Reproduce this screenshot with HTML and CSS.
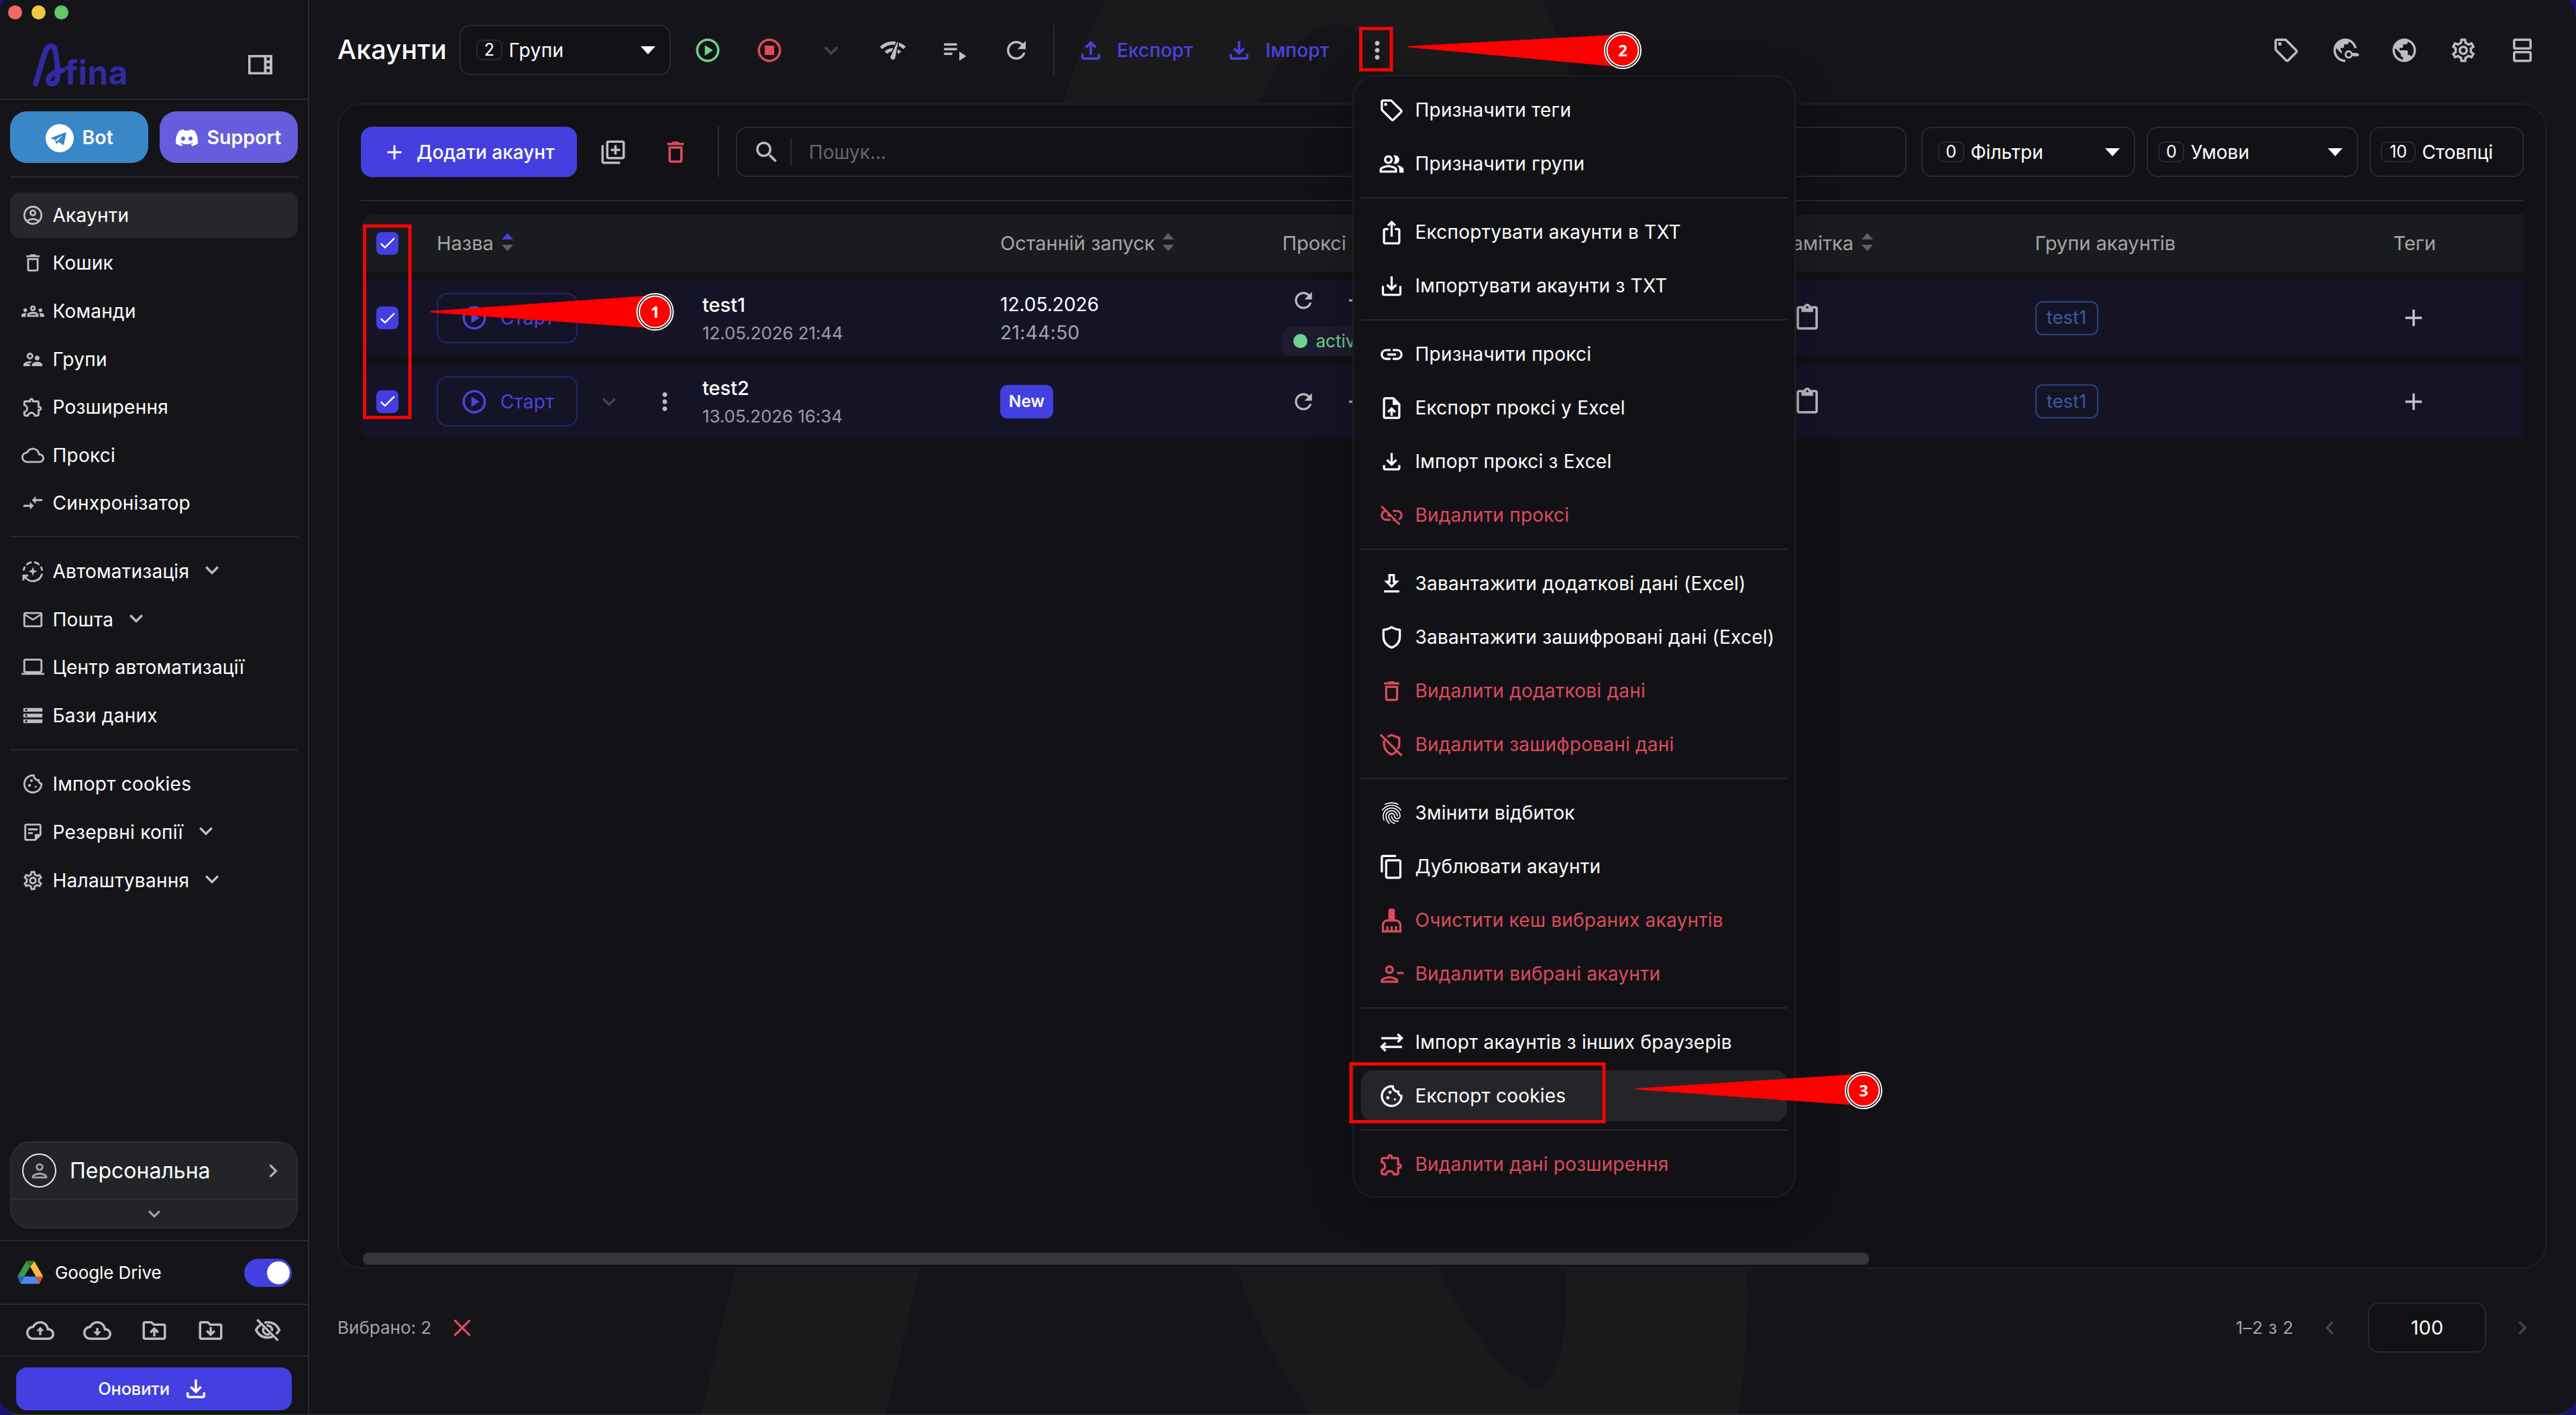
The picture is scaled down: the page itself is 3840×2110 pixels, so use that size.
FILE: index.html
```html
<!DOCTYPE html>
<html lang="uk">
<head>
<meta charset="utf-8">
<title>Afina — Акаунти</title>
<link rel="stylesheet" href="styles.css">
</head>
<body>
<svg class="sprite" aria-hidden="true">
  <symbol id="i-account" viewBox="0 0 24 24"><path d="M12 2C6.48 2 2 6.48 2 12s4.48 10 10 10 10-4.48 10-10S17.52 2 12 2M7.35 18.5C8.66 17.56 10.26 17 12 17s3.34.56 4.65 1.5c-1.31.94-2.91 1.5-4.65 1.5s-3.34-.56-4.65-1.5m10.79-1.38C16.45 15.8 14.32 15 12 15s-4.45.8-6.14 2.12C4.7 15.73 4 13.95 4 12c0-4.42 3.58-8 8-8s8 3.58 8 8c0 1.95-.7 3.73-1.86 5.12M12 6c-1.93 0-3.5 1.57-3.5 3.5S10.07 13 12 13s3.5-1.57 3.5-3.5S13.93 6 12 6m0 5c-.83 0-1.5-.67-1.5-1.5S11.17 8 12 8s1.5.67 1.5 1.5S12.83 11 12 11"/></symbol>
  <symbol id="i-delete" viewBox="0 0 24 24"><path d="M6 19c0 1.1.9 2 2 2h8c1.1 0 2-.9 2-2V7H6zM8 9h8v10H8zm7.5-5-1-1h-5l-1 1H5v2h14V4z"/></symbol>
  <symbol id="i-groups" viewBox="0 0 24 24"><path d="M4 13c1.1 0 2-.9 2-2s-.9-2-2-2-2 .9-2 2 .9 2 2 2m1.13 1.1c-.37-.06-.74-.1-1.13-.1-.99 0-1.93.21-2.78.58C.48 14.9 0 15.62 0 16.43V18h4.5v-1.61c0-.83.23-1.61.63-2.29M20 13c1.1 0 2-.9 2-2s-.9-2-2-2-2 .9-2 2 .9 2 2 2m4 3.43c0-.81-.48-1.53-1.22-1.85-.85-.37-1.79-.58-2.78-.58-.39 0-.76.04-1.13.1.4.68.63 1.46.63 2.29V18H24zm-7.76-2.78c-1.17-.52-2.61-.9-4.24-.9s-3.07.39-4.24.9C6.68 14.13 6 15.21 6 16.39V18h12v-1.61c0-1.18-.68-2.26-1.76-2.74M8.07 16c.09-.23.13-.39.91-.69.97-.38 1.99-.56 3.02-.56s2.05.18 3.02.56c.77.3.81.46.91.69zM12 8c.55 0 1 .45 1 1s-.45 1-1 1-1-.45-1-1 .45-1 1-1m0-2c-1.66 0-3 1.34-3 3s1.34 3 3 3 3-1.34 3-3-1.34-3-3-3"/></symbol>
  <symbol id="i-supervisor" viewBox="0 0 24 24"><path d="M9 12c1.93 0 3.5-1.57 3.5-3.5S10.93 5 9 5 5.5 6.57 5.5 8.5 7.07 12 9 12m0-5c.83 0 1.5.67 1.5 1.5S9.83 10 9 10s-1.5-.67-1.5-1.5S8.17 7 9 7m.05 10H4.77c.99-.5 2.7-1 4.23-1 .11 0 .23.01.34.01.34-.73.93-1.33 1.64-1.81-.73-.13-1.42-.2-1.98-.2-2.34 0-7 1.17-7 3.5V19h7v-1.5c0-.17.02-.34.05-.5m7.45-2.5c-1.84 0-5.5 1.01-5.5 3V19h11v-1.5c0-1.99-3.66-3-5.5-3m1.21-1.82c.76-.43 1.29-1.24 1.29-2.18C19 9.12 17.88 8 16.5 8S14 9.12 14 10.5c0 .94.53 1.75 1.29 2.18.36.2.77.32 1.21.32s.85-.12 1.21-.32"/></symbol>
  <symbol id="i-extension" viewBox="0 0 24 24"><path d="M10.5 4.5c.28 0 .5.22.5.5v2h6v6h2c.28 0 .5.22.5.5s-.22.5-.5.5h-2v6h-2.12c-.68-1.75-2.39-3-4.38-3s-3.7 1.25-4.38 3H4v-2.12c1.75-.68 3-2.39 3-4.38 0-1.99-1.24-3.7-2.99-4.38L4 7h6V5c0-.28.22-.5.5-.5m0-2C9.12 2.5 8 3.62 8 5H4c-1.1 0-1.99.9-1.99 2v3.8h.29c1.49 0 2.7 1.21 2.7 2.7s-1.21 2.7-2.7 2.7H2V20c0 1.1.9 2 2 2h3.8v-.3c0-1.49 1.21-2.7 2.7-2.7s2.7 1.21 2.7 2.7v.3H17c1.1 0 2-.9 2-2v-4c1.38 0 2.5-1.12 2.5-2.5S20.38 11 19 11V7c0-1.1-.9-2-2-2h-4c0-1.38-1.12-2.5-2.5-2.5"/></symbol>
  <symbol id="i-cloud" viewBox="0 0 24 24"><path d="M19.35 10.04C18.67 6.59 15.64 4 12 4 9.11 4 6.6 5.64 5.35 8.04 2.34 8.36 0 10.91 0 14c0 3.31 2.69 6 6 6h13c2.76 0 5-2.24 5-5 0-2.64-2.05-4.78-4.65-4.96M19 18H6c-2.21 0-4-1.79-4-4 0-2.05 1.53-3.76 3.56-3.97l1.07-.11.5-.95C8.08 7.14 9.94 6 12 6c2.62 0 4.88 1.86 5.39 4.43l.3 1.5 1.53.11c1.56.1 2.78 1.41 2.78 2.96 0 1.65-1.35 3-3 3"/></symbol>
  <symbol id="i-compare" viewBox="0 0 24 24"><path d="M9.01 14H2v2h7.01v3L13 15l-3.99-4zm5.98-1v-3H22V8h-7.01V5L11 9z"/></symbol>
  <symbol id="i-auto" viewBox="0 0 24 24"><g fill="none" stroke="currentColor" stroke-width="2"><path d="M2.2 11.2a9.8 9.8 0 0 1 1.5-4.1M5.2 5.2a9.8 9.8 0 0 1 5.4-2.9M13.4 2.3a9.8 9.8 0 0 1 5.4 2.9M20.3 7.1a9.8 9.8 0 0 1 1.5 4.1M21.7 14.4A9.9 9.9 0 0 1 4 18.2"/><path d="M2 21.5v-5.2h5.2"/></g><path d="M12 7.2l1.3 3.5 3.5 1.3-3.5 1.3-1.3 3.5-1.3-3.5L7.2 12l3.5-1.3zM2 16h5l-5 5z"/></symbol>
  <symbol id="i-mail" viewBox="0 0 24 24"><path d="M22 6c0-1.1-.9-2-2-2H4c-1.1 0-2 .9-2 2v12c0 1.1.9 2 2 2h16c1.1 0 2-.9 2-2zm-2 0-8 5-8-5zm0 12H4V8l8 5 8-5z"/></symbol>
  <symbol id="i-laptop" viewBox="0 0 24 24"><path d="M20 18c1.1 0 1.99-.9 1.99-2L22 5c0-1.1-.9-2-2-2H4c-1.1 0-2 .9-2 2v11c0 1.1.9 2 2 2H0v2h24v-2zM4 5h16v11H4z"/></symbol>
  <symbol id="i-storage" viewBox="0 0 24 24"><path d="M2 20h20v-4H2zm2-3h2v2H4zM2 4v4h20V4zm4 3H4V5h2zm-4 7h20v-4H2zm2-3h2v2H4z"/></symbol>
  <symbol id="i-cookie" viewBox="0 0 24 24"><path d="M21.95 10.99c-1.79-.03-3.7-1.95-2.68-4.22-2.97 1-5.78-1.59-5.19-4.56C7.11.74 2 6.41 2 12c0 5.52 4.48 10 10 10 5.89 0 10.54-5.08 9.95-11.01M12 20c-4.41 0-8-3.59-8-8 0-3.31 2.73-8.18 8.08-8.02.42 2.54 2.44 4.56 4.99 4.94.07.36.52 2.55 2.92 3.63C19.7 16.86 16.06 20 12 20"/><circle cx="8.5" cy="13.5" r="1.5"/><circle cx="10.5" cy="8.5" r="1.5"/><circle cx="15" cy="15" r="1"/></symbol>
  <symbol id="i-note" viewBox="0 0 24 24"><path d="M19 5v9h-5v5H5V5zm0-2H5c-1.1 0-2 .9-2 2v14c0 1.1.9 2 2 2h10l6-6V5c0-1.1-.9-2-2-2m-7 11H7v-2h5zm5-4H7V8h10z"/></symbol>
  <symbol id="i-settings" viewBox="0 0 24 24"><path d="M19.43 12.98c.04-.32.07-.64.07-.98s-.03-.66-.07-.98l2.11-1.65c.19-.15.24-.42.12-.64l-2-3.46c-.09-.16-.26-.25-.44-.25-.06 0-.12.01-.17.03l-2.49 1c-.52-.4-1.08-.73-1.69-.98l-.38-2.65C14.46 2.18 14.25 2 14 2h-4c-.25 0-.46.18-.49.42l-.38 2.65c-.61.25-1.17.59-1.69.98l-2.49-1c-.06-.02-.12-.03-.18-.03-.17 0-.34.09-.43.25l-2 3.46c-.13.22-.07.49.12.64l2.11 1.65c-.04.32-.07.65-.07.98s.03.66.07.98l-2.11 1.65c-.19.15-.24.42-.12.64l2 3.46c.09.16.26.25.44.25.06 0 .12-.01.17-.03l2.49-1c.52.4 1.08.73 1.69.98l.38 2.65c.03.24.24.42.49.42h4c.25 0 .46-.18.49-.42l.38-2.65c.61-.25 1.17-.59 1.69-.98l2.49 1c.06.02.12.03.18.03.17 0 .34-.09.43-.25l2-3.46c.12-.22.07-.49-.12-.64zm-1.98-1.71c.04.31.05.52.05.73s-.02.43-.05.73l-.14 1.13.89.7 1.08.84-.7 1.21-1.27-.51-1.04-.42-.9.68c-.43.32-.84.56-1.25.73l-1.06.43-.16 1.13-.2 1.35h-1.4l-.19-1.35-.16-1.13-1.06-.43c-.43-.18-.83-.41-1.23-.71l-.91-.7-1.06.43-1.27.51-.7-1.21 1.08-.84.89-.7-.14-1.13c-.03-.31-.05-.54-.05-.74s.02-.43.05-.73l.14-1.13-.89-.7-1.08-.84.7-1.21 1.27.51 1.04.42.9-.68c.43-.32.84-.56 1.25-.73l1.06-.43.16-1.13.2-1.35h1.39l.19 1.35.16 1.13 1.06.43c.43.18.83.41 1.23.71l.91.7 1.06-.43 1.27-.51.7 1.21-1.07.85-.89.7zM12 8c-2.21 0-4 1.79-4 4s1.79 4 4 4 4-1.79 4-4-1.79-4-4-4m0 6c-1.1 0-2-.9-2-2s.9-2 2-2 2 .9 2 2-.9 2-2 2"/></symbol>
  <symbol id="i-person" viewBox="0 0 24 24"><path d="M12 6c1.1 0 2 .9 2 2s-.9 2-2 2-2-.9-2-2 .9-2 2-2m0 10c2.7 0 5.8 1.29 6 2H6c.23-.72 3.31-2 6-2m0-12C9.79 4 8 5.79 8 8s1.79 4 4 4 4-1.79 4-4-1.79-4-4-4m0 10c-2.67 0-8 1.34-8 4v2h16v-2c0-2.66-5.33-4-8-4"/></symbol>
  <symbol id="i-chev" viewBox="0 0 24 24"><path d="M7.41 8.59 12 13.17l4.59-4.58L18 10l-6 6-6-6z"/></symbol>
  <symbol id="i-panel" viewBox="0 0 36 29"><path fill-rule="evenodd" d="M0 0h36v29H0zM3.5 3.5v22h20v-22zM27.500 3.500v4.500h4.500v-4.500zM27.500 12.200v4.500h4.500v-4.500zM27.500 21v4.500h4.500v-4.500z"/></symbol>
  <symbol id="i-public" viewBox="0 0 24 24"><path d="M12 2C6.48 2 2 6.480 2 12s4.480 10 10 10 10-4.480 10-10S17.520 2 12 2m-1 17.930c-3.950-.490-7-3.850-7-7.930 0-.620.080-1.210.210-1.790L9 15v1c0 1.100.900 2 2 2zm6.900-2.540c-.260-.810-1-1.390-1.900-1.390h-1v-3c0-.550-.450-1-1-1H8v-2h2c.550 0 1-.450 1-1V7h2c1.100 0 2-.900 2-2v-.410c2.930 1.190 5 4.060 5 7.410 0 2.080-.800 3.970-2.100 5.390"/></symbol>
  <symbol id="i-publickey" viewBox="0 0 24 24"><path d="M11 19.930c-3.950-.490-7-3.850-7-7.930 0-.620.080-1.210.210-1.790L9 15v-3H8v-2h2c.550 0 1-.450 1-1V7h2c1.100 0 2-.900 2-2v-.410c2 .8 3.600 2.400 4.400 4.410l.3 1.200H21.800C20.900 5.500 16.900 2 12 2 6.480 2 2 6.480 2 12s4.480 10 10 10v-2z"/><path fill-rule="evenodd" d="M15 12c-1.930 0-3.500 1.570-3.500 3.500S13.070 19 15 19c1.500 0 2.700-.9 3.200-2.200h1.300l.8.8 1.100-.9 1 .9 1.600-1.700-1.600-1.600h-4.200C17.700 13 16.500 12 15 12m0 1.700a1.800 1.800 0 1 1 0 3.600 1.800 1.800 0 0 1 0-3.600"/></symbol>
  <symbol id="i-tag" viewBox="0 0 24 24"><path d="m21.410 11.410-8.830-8.830c-.370-.370-.880-.580-1.410-.580H4c-1.100 0-2 .900-2 2v7.170c0 .530.210 1.040.590 1.410l8.830 8.830c.780.780 2.050.780 2.830 0l7.170-7.170c.780-.780.780-2.040-.010-2.830M12.830 20 4 11.170V4h7.170L20 12.830z"/><circle cx="6.500" cy="6.500" r="1.500"/></symbol>
  <symbol id="i-people" viewBox="0 0 24 24"><path d="M16.670 13.130C18.040 14.060 19 15.320 19 17v3h4v-3c0-2.180-3.570-3.470-6.330-3.870M15 12c2.210 0 4-1.790 4-4s-1.790-4-4-4c-.470 0-.910.100-1.330.240C14.500 5.270 15 6.580 15 8s-.5 2.730-1.330 3.760c.42.14.86.24 1.330.24m-6 0c2.210 0 4-1.790 4-4s-1.790-4-4-4-4 1.790-4 4 1.790 4 4 4m0-6c1.100 0 2 .9 2 2s-.9 2-2 2-2-.9-2-2 .9-2 2-2m0 7c-2.670 0-8 1.340-8 4v3h16v-3c0-2.660-5.330-4-8-4m6 5H3v-.99C3.200 16.290 6.300 15 9 15s5.800 1.290 6 2z"/></symbol>
  <symbol id="i-share" viewBox="0 0 24 24"><path d="m16 5-1.420 1.420-1.590-1.590V16h-1.980V4.830L9.420 6.420 8 5l4-4zm4 5v11c0 1.100-.9 2-2 2H6c-1.110 0-2-.9-2-2V10c0-1.110.89-2 2-2h3v2H6v11h12V10h-3V8h3c1.100 0 2 .89 2 2"/></symbol>
  <symbol id="i-save" viewBox="0 0 24 24"><path d="M19 12v7H5v-7H3v7c0 1.100.9 2 2 2h14c1.100 0 2-.9 2-2v-7zm-6 .67 2.590-2.580L17 11.500l-5 5-5-5 1.410-1.410L11 12.670V3h2z"/></symbol>
  <symbol id="i-link" viewBox="0 0 24 24"><path d="M3.900 12c0-1.710 1.390-3.100 3.100-3.100h4V7H7c-2.760 0-5 2.240-5 5s2.240 5 5 5h4v-1.900H7c-1.710 0-3.100-1.390-3.100-3.100M8 13h8v-2H8zm9-6h-4v1.900h4c1.710 0 3.100 1.390 3.100 3.100s-1.390 3.100-3.100 3.100h-4V17h4c2.760 0 5-2.240 5-5s-2.240-5-5-5"/></symbol>
  <symbol id="i-upfile" viewBox="0 0 24 24"><path d="M14 2H6c-1.100 0-1.990.9-1.990 2L4 20c0 1.100.89 2 1.990 2H18c1.100 0 2-.9 2-2V8zm4 18H6V4h7v5h5zM8 15.010l1.410 1.410L11 14.840V19h2v-4.160l1.590 1.590L16 15.010 12.010 11z"/></symbol>
  <symbol id="i-down" viewBox="0 0 24 24"><path d="M18 15v3H6v-3H4v3c0 1.100.9 2 2 2h12c1.100 0 2-.9 2-2v-3zm-1-4-1.410-1.410L13 12.170V4h-2v8.170L8.410 9.590 7 11l5 5z"/></symbol>
  <symbol id="i-up" viewBox="0 0 24 24"><path d="M18 15v3H6v-3H4v3c0 1.100.9 2 2 2h12c1.100 0 2-.9 2-2v-3zM7 9l1.410 1.410L11 7.830V16h2V7.830l2.590 2.580L17 9l-5-5z"/></symbol>
  <symbol id="i-unlink" viewBox="0 0 24 24"><path d="M17 7h-4v1.900h4c1.710 0 3.100 1.390 3.100 3.100 0 1.430-.98 2.630-2.310 2.980l1.460 1.460C20.880 15.610 22 13.950 22 12c0-2.760-2.240-5-5-5m-1 4h-2.190l2 2H16zM2 4.270l3.110 3.110C3.290 8.120 2 9.910 2 12c0 2.760 2.240 5 5 5h4v-1.900H7c-1.710 0-3.100-1.390-3.100-3.100 0-1.590 1.210-2.900 2.760-3.070L8.730 11H8v2h2.730L13 15.270V17h1.730l4.010 4L20 19.740 3.270 3z"/></symbol>
  <symbol id="i-getapp" viewBox="0 0 24 24"><path d="M19 9h-4V3H9v6H5l7 7zm-8 2V5h2v6h1.170L12 13.170 9.830 11zm-6 7h14v2H5z"/></symbol>
  <symbol id="i-shield" viewBox="0 0 24 24"><path fill="none" stroke="currentColor" stroke-width="2" stroke-linejoin="round" d="M12 2.500C10 4 7.500 4.800 4.500 5v6.200c0 4.900 3 8.500 7.500 10.100 4.500-1.600 7.500-5.200 7.500-10.100V5C16.500 4.800 14 4 12 2.500z"/></symbol>
  <symbol id="i-unshield" viewBox="0 0 24 24"><path fill="none" stroke="currentColor" stroke-width="2" d="M8.300 4.600 12 3.100l7 2.700v5.300c0 1.800-.4 3.300-1.200 4.800M5 8v3.100c0 4.500 2.900 8.500 7 9.900 1.700-.6 3.200-1.600 4.300-3M1.700 2.700 21.300 22"/></symbol>
  <symbol id="i-finger" viewBox="0 0 24 24"><path d="M17.810 4.470c-.08 0-.16-.02-.23-.06C15.660 3.420 14 3 12.010 3c-1.980 0-3.860.47-5.570 1.410-.24.13-.54.04-.68-.2-.13-.24-.04-.55.2-.68C7.820 2.520 9.860 2 12.010 2c2.130 0 3.990.47 6.030 1.520.25.13.34.43.21.67-.09.18-.26.28-.44.28M3.500 9.720c-.1 0-.2-.03-.29-.09-.23-.16-.28-.47-.12-.7.99-1.400 2.250-2.500 3.750-3.270C9.980 4.040 14 4.030 17.150 5.650c1.500.77 2.760 1.860 3.750 3.250.16.22.11.54-.12.7s-.54.11-.7-.12c-.9-1.260-2.040-2.250-3.390-2.940-2.870-1.470-6.540-1.470-9.400.01-1.360.7-2.500 1.700-3.400 2.960-.08.14-.23.21-.39.21m6.250 12.070c-.13 0-.26-.05-.35-.15-.87-.87-1.340-1.430-2.010-2.640-.69-1.230-1.050-2.730-1.050-4.340 0-2.970 2.540-5.390 5.660-5.390s5.660 2.420 5.660 5.390c0 .28-.22.5-.5.5s-.5-.22-.5-.5c0-2.420-2.090-4.390-4.660-4.390s-4.660 1.970-4.660 4.390c0 1.440.32 2.770.93 3.850.64 1.150 1.080 1.640 1.850 2.420.19.2.19.51 0 .71-.11.1-.24.15-.37.15m7.170-1.850c-1.190 0-2.240-.3-3.100-.89-1.490-1.010-2.380-2.650-2.380-4.390 0-.28.22-.5.5-.5s.5.22.5.5c0 1.410.72 2.740 1.940 3.560.71.48 1.540.71 2.540.71.24 0 .64-.03 1.040-.1.27-.05.53.13.58.41.05.27-.13.53-.41.58-.57.11-1.070.12-1.210.12M14.910 22c-.04 0-.09-.01-.13-.02-1.590-.44-2.630-1.030-3.720-2.100-1.400-1.390-2.170-3.240-2.170-5.220 0-1.620 1.380-2.940 3.080-2.940s3.080 1.320 3.080 2.940c0 1.070.93 1.940 2.080 1.940s2.080-.87 2.080-1.940c0-3.770-3.250-6.830-7.250-6.830-2.840 0-5.440 1.580-6.610 4.030-.39.81-.59 1.760-.59 2.800 0 .78.07 2.010.67 3.610.1.26-.03.55-.29.64-.26.1-.55-.04-.64-.29-.49-1.310-.73-2.610-.73-3.960 0-1.200.23-2.290.68-3.240 1.330-2.790 4.280-4.600 7.510-4.600 4.550 0 8.250 3.510 8.250 7.830 0 1.620-1.380 2.940-3.080 2.940s-3.080-1.320-3.080-2.940c0-1.070-.93-1.940-2.080-1.940s-2.080.87-2.080 1.940c0 1.710.66 3.310 1.870 4.510.95.94 1.860 1.460 3.270 1.850.27.07.42.35.35.61-.05.23-.26.38-.47.38"/></symbol>
  <symbol id="i-copy" viewBox="0 0 24 24"><path d="M16 1H4c-1.100 0-2 .9-2 2v14h2V3h12zm3 4H8c-1.100 0-2 .9-2 2v14c0 1.100.9 2 2 2h11c1.100 0 2-.9 2-2V7c0-1.100-.9-2-2-2m0 16H8V7h11z"/></symbol>
  <symbol id="i-clean" viewBox="0 0 24 24"><path d="M16 11h-1V3c0-1.100-.9-2-2-2h-2c-1.100 0-2 .9-2 2v8H8c-2.760 0-5 2.240-5 5v7h18v-7c0-2.760-2.240-5-5-5m3 10h-2v-3c0-.55-.45-1-1-1s-1 .45-1 1v3h-2v-3c0-.55-.45-1-1-1s-1 .45-1 1v3H9v-3c0-.55-.45-1-1-1s-1 .45-1 1v3H5v-5c0-1.650 1.350-3 3-3h8c1.650 0 3 1.350 3 3z"/></symbol>
  <symbol id="i-personrm" viewBox="0 0 24 24"><path d="M14 8c0-2.210-1.790-4-4-4S6 5.790 6 8s1.790 4 4 4 4-1.790 4-4m-2 0c0 1.100-.9 2-2 2s-2-.9-2-2 .9-2 2-2 2 .9 2 2M2 18v2h16v-2c0-2.660-5.330-4-8-4s-8 1.340-8 4m2 0c.2-.71 3.300-2 6-2 2.690 0 5.770 1.280 6 2zm13-8h6v2h-6z"/></symbol>
  <symbol id="i-sync" viewBox="0 0 24 24"><path fill="none" stroke="currentColor" stroke-width="2" d="M2.500 8h18.500M17.500 4.300 21.300 8l-3.800 3.700M21.500 16H3M6.500 12.300 2.700 16l3.800 3.700"/></symbol>
  <symbol id="i-play" viewBox="0 0 24 24"><path d="M12 2C6.480 2 2 6.480 2 12s4.480 10 10 10 10-4.480 10-10S17.520 2 12 2m0 18c-4.410 0-8-3.590-8-8s3.590-8 8-8 8 3.590 8 8-3.590 8-8 8m-2.500-3.500 7-4.500-7-4.500z"/></symbol>
  <symbol id="i-stop" viewBox="0 0 24 24"><path d="M12 2C6.480 2 2 6.480 2 12s4.480 10 10 10 10-4.480 10-10S17.520 2 12 2m0 18c-4.410 0-8-3.590-8-8s3.590-8 8-8 8 3.590 8 8-3.590 8-8 8M8 8h8v8H8z"/></symbol>
  <symbol id="i-netcheck" viewBox="0 0 24 24"><path d="M15.900 5c-.17 0-.32.09-.41.23l-.07.15-5.180 11.650c-.16.29-.26.61-.26.96 0 1.110.9 2.010 2.010 2.010.96 0 1.770-.68 1.960-1.590l.01-.03L16.400 5.500c0-.28-.22-.5-.5-.5M1 9l2 2c2.880-2.880 6.790-4.080 10.530-3.620l1.190-2.680C9.890 3.840 4.740 5.270 1 9m20 2 2-2c-1.640-1.640-3.550-2.820-5.590-3.570l-.53 2.820c1.500.62 2.900 1.530 4.120 2.750m-4 4 2-2c-.8-.8-1.700-1.420-2.660-1.890l-.55 2.920c.42.27.83.59 1.210.97M5 13l2 2c1.130-1.130 2.560-1.790 4.030-2l1.280-2.880c-2.630-.08-5.300.87-7.310 2.880"/></symbol>
  <symbol id="i-playlist" viewBox="0 0 24 24"><path d="M3 10h11v2H3zm0-4h11v2H3zm0 8h7v2H3zm13-1v8l6-4z"/></symbol>
  <symbol id="i-refresh" viewBox="0 0 24 24"><path d="M17.650 6.350C16.200 4.900 14.210 4 12 4c-4.420 0-7.990 3.580-7.990 8s3.570 8 7.990 8c3.730 0 6.840-2.550 7.730-6h-2.080c-.82 2.330-3.040 4-5.650 4-3.310 0-6-2.690-6-6s2.690-6 6-6c1.660 0 3.140.69 4.220 1.780L13 11h7V4z"/></symbol>
  <symbol id="i-libadd" viewBox="0 0 24 24"><path d="M4 6H2v14c0 1.100.9 2 2 2h14v-2H4zm16-4H8c-1.100 0-2 .9-2 2v12c0 1.100.9 2 2 2h12c1.100 0 2-.9 2-2V4c0-1.100-.9-2-2-2m0 14H8V4h12zm-7-2h2v-3h3V9h-3V6h-2v3h-3v2h3z"/></symbol>
  <symbol id="i-search" viewBox="0 0 24 24"><path d="M15.500 14h-.79l-.28-.27C15.410 12.590 16 11.110 16 9.500 16 5.910 13.090 3 9.500 3S3 5.910 3 9.500 5.910 16 9.500 16c1.610 0 3.090-.59 4.230-1.570l.27.28v.79l5 4.990L20.490 19zm-6 0C7.010 14 5 11.990 5 9.500S7.010 5 9.500 5 14 7.010 14 9.500 11.990 14 9.500 14"/></symbol>
  <symbol id="i-paste" viewBox="0 0 24 24"><path d="M19 2h-4.180C14.400.84 13.300 0 12 0S9.600.84 9.180 2H5c-1.100 0-2 .9-2 2v16c0 1.100.9 2 2 2h14c1.100 0 2-.9 2-2V4c0-1.100-.9-2-2-2m-7 0c.55 0 1 .45 1 1s-.45 1-1 1-1-.45-1-1 .45-1 1-1m7 18H5V4h2v3h10V4h2z"/></symbol>
  <symbol id="i-agenda" viewBox="0 0 24 24"><path fill="none" stroke="currentColor" stroke-width="2" d="M6 3h12a1 1 0 0 1 1 1v5.400a1 1 0 0 1-1 1H6a1 1 0 0 1-1-1V4a1 1 0 0 1 1-1zM6 13.600h12a1 1 0 0 1 1 1V20a1 1 0 0 1-1 1H6a1 1 0 0 1-1-1v-5.400a1 1 0 0 1 1-1z"/></symbol>
  <symbol id="i-plus" viewBox="0 0 24 24"><path d="M19 13h-6v6h-2v-6H5v-2h6V5h2v6h6z"/></symbol>
  <symbol id="i-dots" viewBox="0 0 24 24"><path d="M12 8c1.100 0 2-.9 2-2s-.9-2-2-2-2 .9-2 2 .9 2 2 2m0 2c-1.100 0-2 .9-2 2s.9 2 2 2 2-.9 2-2-.9-2-2-2m0 6c-1.100 0-2 .9-2 2s.9 2 2 2 2-.9 2-2-.9-2-2-2"/></symbol>
  <symbol id="i-close" viewBox="0 0 24 24"><path fill="none" stroke="currentColor" stroke-width="2.400" stroke-linecap="round" d="M4 4l16 16M20 4L4 20"/></symbol>
  <symbol id="i-cloudup" viewBox="0 0 24 24"><use href="#i-cloud"/><path d="M12 8.800 8.600 12.400h2.400v3.400h2v-3.400h2.400z"/></symbol>
  <symbol id="i-clouddown" viewBox="0 0 24 24"><use href="#i-cloud"/><path d="M12 16.500l3.500-3.600H13V9.800h-2v3.100H8.500z"/></symbol>
  <symbol id="i-folderup" viewBox="0 0 24 24"><path d="M20 6h-8l-2-2H4c-1.100 0-2 .9-2 2v12c0 1.100.9 2 2 2h16c1.100 0 2-.9 2-2V8c0-1.100-.9-2-2-2m0 12H4V6h5.170l2 2H20zM9.410 14.420 11 12.840V17h2v-4.160l1.590 1.590L16 13.010 12.010 9 8 13.010z"/></symbol>
  <symbol id="i-folderdown" viewBox="0 0 24 24"><path d="M20 6h-8l-2-2H4c-1.100 0-2 .9-2 2v12c0 1.100.9 2 2 2h16c1.100 0 2-.9 2-2V8c0-1.100-.9-2-2-2m0 12H4V6h5.170l2 2H20zM9.410 11.580 11 13.160V9h2v4.160l1.590-1.590L16 12.990 12.010 17 8 12.990z"/></symbol>
  <symbol id="i-eyeoff" viewBox="0 0 24 24"><g fill="none" stroke="currentColor" stroke-width="2"><path d="M9.200 5.400A11 11 0 0 1 12 5c4.300 0 8 2.500 9.900 6.500a11.600 11.600 0 0 1-2.700 3.500M6 7.100a11.500 11.500 0 0 0-3.900 4.400C4 15.500 7.700 18 12 18c1.500 0 2.900-.3 4.200-.8M3 2.700 20.800 20.500"/><path d="M8.600 9.800a3.800 3.800 0 0 0 5.200 5.100M11 7.800a3.800 3.800 0 0 1 4.600 4.700"/></g></symbol>
  <symbol id="i-check" viewBox="0 0 24 24"><path fill="none" stroke="#fff" stroke-width="1.900" stroke-linecap="round" stroke-linejoin="round" d="M5 13l4.200 4.200L19.500 6.800"/></symbol>
  <symbol id="i-discord" viewBox="0 0 24 24"><path fill-rule="evenodd" d="M20.317 4.370a19.791 19.791 0 0 0-4.885-1.515.074.074 0 0 0-.079.037c-.21.375-.444.864-.608 1.250a18.270 18.270 0 0 0-5.487 0 12.640 12.640 0 0 0-.617-1.250.077.077 0 0 0-.079-.037A19.736 19.736 0 0 0 3.677 4.370a.07.07 0 0 0-.032.027C.533 9.046-.32 13.580.099 18.057a.082.082 0 0 0 .031.057 19.900 19.900 0 0 0 5.993 3.030.078.078 0 0 0 .084-.028c.462-.63.874-1.295 1.226-1.994a.076.076 0 0 0-.041-.106 13.107 13.107 0 0 1-1.872-.892.077.077 0 0 1-.008-.128c.126-.094.252-.192.372-.292a.074.074 0 0 1 .077-.01c3.928 1.793 8.180 1.793 12.062 0a.074.074 0 0 1 .078.01c.12.098.246.198.373.292a.077.077 0 0 1-.006.127 12.299 12.299 0 0 1-1.873.892.077.077 0 0 0-.041.107c.36.698.772 1.362 1.225 1.993a.076.076 0 0 0 .084.028 19.839 19.839 0 0 0 6.002-3.030.077.077 0 0 0 .032-.054c.5-5.177-.838-9.674-3.549-13.660a.061.061 0 0 0-.031-.03zM8.020 15.330c-1.183 0-2.157-1.085-2.157-2.419 0-1.333.956-2.419 2.157-2.419 1.210 0 2.176 1.096 2.157 2.420 0 1.333-.956 2.418-2.157 2.418zm7.975 0c-1.183 0-2.157-1.085-2.157-2.419 0-1.333.955-2.419 2.157-2.419 1.210 0 2.176 1.096 2.157 2.420 0 1.333-.946 2.418-2.157 2.418z"/></symbol>
</svg>

<div class="window">
  <aside class="sidebar">
    <div class="traffic"><i class="red"></i><i class="yellow"></i><i class="green"></i></div>
    <div class="brand">
      <div class="logo">
        <svg class="logo-mark" viewBox="0 0 48 66"><path fill="none" stroke="currentColor" stroke-width="8" stroke-linecap="round" stroke-linejoin="round" d="M4 61C10 44 14 23 20 10c3-7 12-7 13 0 3 16 4 30 4 38 0 8-3 13-9 13-6 0-7-8-1-13 5-4 11-6 17-7"/></svg>
        <span class="logo-text">fina</span>
      </div>
      <svg class="panel-ic"><use href="#i-panel"/></svg>
    </div>
    <div class="promo">
      <a class="promo-btn bot"><svg viewBox="0 0 42 42" width="42" height="42"><circle cx="21" cy="21" r="21" fill="#fff"/><path fill="#3a87c7" d="M8.500 20.600 29 12.600c1.200-.4 2 .3 1.600 1.900L27.300 29.700c-.3 1.300-1.100 1.600-2.200 1l-5.500-4-2.800 2.600c-.6.500-1.200.2-1.300-.5l-1.400-5.400-5.500-1.600c-1-.3-1-1 0-1.300zM17.300 26.200l.6-1.800 7.900-7.600-10.300 6.200z"/></svg>Bot</a>
      <a class="promo-btn support"><svg width="33" height="33"><use href="#i-discord"/></svg>Support</a>
    </div>
    <hr>
    <nav>
      <a class="active"><svg><use href="#i-account"/></svg>Акаунти</a>
      <a><svg><use href="#i-delete"/></svg>Кошик</a>
      <a><svg><use href="#i-groups"/></svg>Команди</a>
      <a><svg><use href="#i-supervisor"/></svg>Групи</a>
      <a><svg><use href="#i-extension"/></svg>Розширення</a>
      <a><svg><use href="#i-cloud"/></svg>Проксі</a>
      <a><svg><use href="#i-compare"/></svg>Синхронізатор</a>
    </nav>
    <hr>
    <nav>
      <a><svg><use href="#i-auto"/></svg>Автоматизація<svg class="chev"><use href="#i-chev"/></svg></a>
      <a><svg><use href="#i-mail"/></svg>Пошта<svg class="chev"><use href="#i-chev"/></svg></a>
      <a><svg><use href="#i-laptop"/></svg>Центр автоматизації</a>
      <a><svg><use href="#i-storage"/></svg>Бази даних</a>
    </nav>
    <hr>
    <nav>
      <a><svg><use href="#i-cookie"/></svg>Імпорт cookies</a>
      <a><svg><use href="#i-note"/></svg>Резервні копії<svg class="chev"><use href="#i-chev"/></svg></a>
      <a><svg><use href="#i-settings"/></svg>Налаштування<svg class="chev"><use href="#i-chev"/></svg></a>
    </nav>
    <div class="side-foot">
      <div class="profile">
        <div class="profile-top">
          <span class="avatar"><svg><use href="#i-person"/></svg></span>
          <span class="profile-name">Персональна</span>
          <svg class="chev-right"><use href="#i-chev"/></svg>
        </div>
        <div class="profile-more"><svg><use href="#i-chev"/></svg></div>
      </div>
      <div class="drive">
        <svg class="drive-ic" viewBox="0 0 38 35"><path fill="#3b9a48" d="M13 1 0.500 22.500c-.5 1-.5 2 0 3L10 23.500 19 8.500 14.500 1z"/><path fill="#2a7b35" d="M14.500 0h9c1.200 0 2 .5 2.500 1.300L19 9.500 12.500 1.200C13 .5 13.600 0 14.500 0z"/><path fill="#f5bb3a" d="M25.500 1 37.500 22c.4.700.5 1.500.5 2.200H28L19 8.800z"/><path fill="#2a5fc4" d="M0 23.500h10.500L5 33.500c-.8-.3-1.500-1-2-1.800z"/><path fill="#4d86ec" d="M10.500 23.500h17.500l5 11H7c-1 0-1.500-.4-2.200-1z"/><path fill="#de4a35" d="M28 23.500h10c0 .8-.3 1.500-.6 2L33.500 33c-.5.700-.9 1-1.500 1.300z"/></svg>
        <span>Google Drive</span>
        <i class="toggle"></i>
      </div>
      <div class="tools">
        <svg><use href="#i-cloudup"/></svg><svg><use href="#i-clouddown"/></svg><svg><use href="#i-folderup"/></svg><svg><use href="#i-folderdown"/></svg><svg><use href="#i-eyeoff"/></svg>
      </div>
      <a class="update">Оновити<svg><use href="#i-down"/></svg></a>
    </div>
  </aside>

  <main>
    <svg class="watermark" viewBox="461 0 3379 2110"><path d="M1650 0C1620 50 1600 100 1585 154H1877C1900 100 1940 36 1990 36c50 0 75 60 84 118H2350L2334 85 2300 0z"/><path d="M1099 1885 1044 2110H1319L1374 1885z"/><path d="M1842 1885C1862 1960 1900 2030 1955 2110H2590C2602 2040 2608 1960 2603 1885H2335C2338 1960 2332 2040 2298 2070 2260 2070 2190 1990 2140 1885z"/></svg>
    <header class="topbar">
      <h1>Акаунти</h1>
      <div class="select top-select"><b>2</b>Групи<i class="caret"></i></div>
      <div class="actions">
        <svg class="ok"><use href="#i-play"/></svg>
        <svg class="bad"><use href="#i-stop"/></svg>
        <svg class="dim"><use href="#i-chev"/></svg>
        <svg><use href="#i-netcheck"/></svg>
        <svg><use href="#i-playlist"/></svg>
        <svg><use href="#i-refresh"/></svg>
      </div>
      <i class="vline"></i>
      <a class="link-btn"><svg><use href="#i-up"/></svg>Експорт</a>
      <a class="link-btn"><svg><use href="#i-down"/></svg>Імпорт</a>
      <svg class="more"><use href="#i-dots"/></svg>
      <div class="right-icons">
        <svg><use href="#i-tag"/></svg><svg><use href="#i-publickey"/></svg><svg><use href="#i-public"/></svg><svg><use href="#i-settings"/></svg><svg><use href="#i-agenda"/></svg>
      </div>
    </header>

    <section class="card">
      <div class="filters">
        <a class="add"><svg><use href="#i-plus"/></svg>Додати акаунт</a>
        <svg class="dup"><use href="#i-libadd"/></svg>
        <svg class="trash"><use href="#i-delete"/></svg>
        <i class="vline"></i>
        <div class="search"><svg><use href="#i-search"/></svg><i></i>Пошук...</div>
        <div class="select f1"><b>0</b>Фільтри<i class="caret"></i></div>
        <div class="select f2"><b>0</b>Умови<i class="caret"></i></div>
        <div class="select f3"><b>10</b>Стовпці</div>
      </div>
      <div class="table">
        <div class="tr th">
          <div class="c-check"><i class="check"><svg><use href="#i-check"/></svg></i></div>
          <div>Назва<i class="sort asc"></i></div>
          <div>Останній запуск<i class="sort"></i></div>
          <div>Проксі</div>
          <div>Замітка<i class="sort"></i></div>
          <div>Групи акаунтів</div>
          <div>Теги</div>
        </div>
        <div class="tr row r1">
          <div class="c-check"><i class="check"><svg><use href="#i-check"/></svg></i></div>
          <div class="c-name"><a class="start"><svg><use href="#i-play"/></svg>Старт</a><svg class="rc"><use href="#i-chev"/></svg><svg class="rd"><use href="#i-dots"/></svg><p><strong>test1</strong><small>12.05.2026 21:44</small></p></div>
          <div class="c-last"><p>12.05.2026<span>21:44:50</span></p></div>
          <div class="c-proxy two"><p><svg><use href="#i-refresh"/></svg><svg class="pl"><use href="#i-plus"/></svg></p><em>active</em></div>
          <div class="c-note"><svg><use href="#i-paste"/></svg></div>
          <div><span class="chip">test1</span></div>
          <div class="c-tags"><svg><use href="#i-plus"/></svg></div>
        </div>
        <div class="tr row r2">
          <div class="c-check"><i class="check"><svg><use href="#i-check"/></svg></i></div>
          <div class="c-name"><a class="start"><svg><use href="#i-play"/></svg>Старт</a><svg class="rc"><use href="#i-chev"/></svg><svg class="rd"><use href="#i-dots"/></svg><p><strong>test2</strong><small>13.05.2026 16:34</small></p></div>
          <div><span class="new">New</span></div>
          <div class="c-proxy"><p><svg><use href="#i-refresh"/></svg><svg class="pl"><use href="#i-plus"/></svg></p></div>
          <div class="c-note"><svg><use href="#i-paste"/></svg></div>
          <div><span class="chip">test1</span></div>
          <div class="c-tags"><svg><use href="#i-plus"/></svg></div>
        </div>
      </div>
      <i class="hscroll"></i>
    </section>

    <footer class="pager">
      <span>Вибрано: 2</span><svg class="clear"><use href="#i-close"/></svg>
      <span class="range">1–2 з 2</span>
      <svg class="prev"><use href="#i-chev"/></svg>
      <b>100</b>
      <svg class="next"><use href="#i-chev"/></svg>
    </footer>
  </main>

  <div class="menu">
    <a><svg><use href="#i-tag"/></svg>Призначити теги</a>
    <a><svg><use href="#i-people"/></svg>Призначити групи</a>
    <hr>
    <a><svg><use href="#i-share"/></svg>Експортувати акаунти в TXT</a>
    <a><svg><use href="#i-save"/></svg>Імпортувати акаунти з TXT</a>
    <hr>
    <a><svg><use href="#i-link"/></svg>Призначити проксі</a>
    <a><svg><use href="#i-upfile"/></svg>Експорт проксі у Excel</a>
    <a><svg><use href="#i-down"/></svg>Імпорт проксі з Excel</a>
    <a class="danger"><svg><use href="#i-unlink"/></svg>Видалити проксі</a>
    <hr>
    <a><svg><use href="#i-getapp"/></svg>Завантажити додаткові дані (Excel)</a>
    <a><svg><use href="#i-shield"/></svg>Завантажити зашифровані дані (Excel)</a>
    <a class="danger"><svg><use href="#i-delete"/></svg>Видалити додаткові дані</a>
    <a class="danger"><svg><use href="#i-unshield"/></svg>Видалити зашифровані дані</a>
    <hr>
    <a><svg><use href="#i-finger"/></svg>Змінити відбиток</a>
    <a><svg><use href="#i-copy"/></svg>Дублювати акаунти</a>
    <a class="danger"><svg><use href="#i-clean"/></svg>Очистити кеш вибраних акаунтів</a>
    <a class="danger"><svg><use href="#i-personrm"/></svg>Видалити вибрані акаунти</a>
    <hr>
    <a><svg><use href="#i-sync"/></svg>Імпорт акаунтів з інших браузерів</a>
    <a class="hover"><svg><use href="#i-cookie"/></svg>Експорт cookies</a>
    <hr>
    <a class="danger"><svg><use href="#i-extension"/></svg>Видалити дані розширення</a>
  </div>

  <svg class="notes" viewBox="0 0 3840 2110">
    <g fill="none" stroke="#f00505" stroke-width="5">
      <rect x="543.500" y="337" width="67.500" height="285.500"/>
      <rect x="2028.500" y="42.500" width="45.500" height="61.500"/>
      <rect x="2014" y="1586.500" width="377" height="86"/>
    </g>
    <g fill="#f00">
      <path d="M642 463.800 965 441v48L642 466z"/>
      <path d="M2099 68.800 2405 52v47L2099 70.500z"/>
      <path d="M2438 1623 2765 1602v46L2438 1624.600z"/>
    </g>
    <g stroke="#fff" stroke-width="2">
      <g fill="#111"><circle cx="976.500" cy="465" r="27"/><circle cx="2419" cy="75" r="27"/><circle cx="2778" cy="1626" r="27"/></g>
      <g fill="#f00"><circle cx="976.500" cy="465" r="23.500"/><circle cx="2419" cy="75" r="23.500"/><circle cx="2778" cy="1626" r="23.500"/></g>
    </g>
    <g class="num"><text x="976.500" y="474">1</text><text x="2419" y="84">2</text><text x="2778" y="1635">3</text></g>
  </svg>
</div>
</body>
</html>
```
FILE: styles.css
```css
* { box-sizing: border-box; }
body { margin: 0; background: #1d1272; font: 400 28px/1 Inter, "Noto Sans", sans-serif; color: #fff; }
.sprite { position: absolute; width: 0; height: 0; }
svg { fill: currentColor; flex: none; display: block; }
i, em { font-style: normal; }
p { margin: 0; }
hr { border: 0; height: 2px; background: #2a2a2e; margin: 0; }

.window {
  position: relative; display: flex; width: 3840px; height: 2110px; overflow: hidden;
  background: #151519; border-bottom: 1px solid #38383c;
  border-radius: 12px 14px 32px 32px / 14px 34px 26px 26px;
}

/* Sidebar */
.sidebar { width: 461px; border-right: 2px solid #2a2a2e; display: flex; flex-direction: column; color: #fff; }
.traffic { display: flex; align-items: center; gap: 13.5px; height: 36px; padding-left: 12px; }
.traffic i { width: 21px; height: 21px; border-radius: 50%; }
.red { background: #ee6a63; } .yellow { background: #f4c741; } .green { background: #62c765; }
.brand { display: flex; justify-content: space-between; align-items: center; height: 113px; padding: 10px 53px 0 49px; border-bottom: 2px solid #2a2a2e; }
.logo { display: flex; align-items: flex-end; color: #312aa3; }
.logo-mark { width: 48px; height: 66px; }
.logo-text { font: 700 50px/50px Inter, sans-serif; margin: 0 0 -3px -1px; letter-spacing: .2px; }
.panel-ic { width: 36px; height: 29px; color: #bdbdc0; }
.promo { display: flex; gap: 16.5px; padding: 17px 15px 20px; }
.promo-btn { flex: 1; height: 77px; border-radius: 25px; display: flex; align-items: center; justify-content: center; gap: 13px; padding-top: 2px; font-weight: 600; font-size: 28.5px; }
.bot { background: #3a87c7; } .support { background: #665ddc; }
.sidebar > hr { margin: 0 15px; }
nav { display: flex; flex-direction: column; gap: 4px; padding: 17px 15px 16px; }
.promo + hr + nav { padding-top: 22px; padding-bottom: 15px; }
nav a { display: flex; align-items: center; height: 67.600px; padding-left: 16.500px; border-radius: 15px; letter-spacing: .25px; }
nav a.active { background: #27272b; }
nav svg { width: 34px; height: 34px; margin-right: 13px; color: #bebec1; }
nav svg.chev { width: 40px; height: 40px; margin: -3px 0 0 14px; }

.side-foot { margin-top: auto; }
.profile { margin: 0 15px 17px; height: 130px; border: 2px solid #2d2d31; border-radius: 30px; background: #232427; }
.profile-top { display: flex; align-items: center; height: 85px; padding: 0 15px 0 16px; border-bottom: 2px solid #2f2f33; }
.avatar { width: 51px; height: 51px; border: 2px solid #e8e8ea; border-radius: 50%; display: flex; align-items: center; justify-content: center; }
.avatar svg { width: 34px; height: 34px; color: #a2a2a6; }
.profile-name { font-size: 32px; margin-left: 20px; flex: 1; }
.chev-right { width: 40px; height: 40px; color: #b0b0b4; transform: rotate(-90deg); }
.profile-more { display: flex; justify-content: center; align-items: center; height: 42px; }
.profile-more svg { width: 36px; height: 36px; color: #a8a8ac; }
.drive { display: flex; align-items: center; height: 95px; padding: 0 24px 0 26px; border-top: 2px solid #2a2a2e; font-size: 26px; letter-spacing: -.1px; }
.drive-ic { width: 38px; height: 35px; margin-right: 18px; }
.toggle { margin-left: auto; width: 71px; height: 42px; border-radius: 21px; background: #433fe0; padding: 4px 3px 4px 34px; }
.toggle::after { content: ""; display: block; width: 34px; height: 34px; border-radius: 50%; background: #fff; }
.tools { display: flex; justify-content: space-between; align-items: center; height: 79px; padding: 0 39px; border-top: 2px solid #2a2a2e; border-bottom: 2px solid #2a2a2e; color: #bcbcbf; }
.tools svg { width: 42px; height: 42px; }
.update { display: flex; align-items: center; justify-content: center; gap: 18px; height: 64px; margin: 16px 24px 6px; border-radius: 16px; background: #433fe0; font-weight: 500; font-size: 25.500px; letter-spacing: -.2px; }
.update svg { width: 42px; height: 42px; }

/* Main area */
main { position: relative; width: 3379px; padding: 0 44px 0 42px; display: flex; flex-direction: column; }
.watermark { position: absolute; inset: 0; width: 3379px; height: 2110px; color: #1a1a1d; }
main > :not(.watermark) { position: relative; }
.topbar { display: flex; align-items: center; height: 154px; padding-bottom: 5px; }
h1 { margin: 0; width: 182px; font-size: 39.500px; font-weight: 500; letter-spacing: .2px; line-height: 1; }
.select { display: flex; align-items: center; height: 75px; border: 2px solid #2a2a2e; border-radius: 16px; background: #121216; }
.select b { font-weight: 400; font-size: 25px; height: 31px; min-width: 39px; border: 2px solid #2a2a2e; border-radius: 9px; display: flex; align-items: center; justify-content: center; margin-right: 9.500px; }
.select .caret { margin-left: auto; border: 11px solid transparent; border-top: 12px solid #fff; border-bottom: 0; }
.top-select { width: 315px; padding: 0 21px 0 23px; letter-spacing: .4px; }
.actions { display: flex; margin-left: 9px; }
.actions svg { width: 92px; height: 42px; color: #bdbdc0; }
.actions .ok { color: #6fd38f; } .actions .bad { color: #e04a5f; } .actions .dim { color: #47474b; }
.vline { width: 2px; height: 75px; background: #2d2d31; }
.topbar .vline { margin-left: 9px; margin-right: 33px; }
.link-btn { display: flex; align-items: center; color: #4a43e0; font-weight: 500; letter-spacing: .15px; margin-right: 48px; }
.link-btn svg { width: 42px; height: 42px; margin-right: 18px; }
.more { width: 42px; height: 42px; margin-left: 3px; color: #c4c4c7; }
.right-icons { margin-left: auto; display: flex; margin-right: -8px; color: #bdbdc0; }
.right-icons svg { width: 88px; height: 42px; }

.card { height: 1738px; border: 2px solid #1f1f23; border-radius: 36px; background: #121216; padding: 33px 32px 4px 33px; display: flex; flex-direction: column; }
.filters { display: flex; align-items: center; padding-bottom: 34px; border-bottom: 2px solid #2a2a2e; margin-bottom: 20px; }
.add { display: flex; align-items: center; width: 322px; height: 75px; border-radius: 16px; background: #433fe0; font-weight: 500; padding-left: 32px; }
.add svg { width: 36px; height: 36px; margin-right: 15px; }
.dup { width: 42px; height: 42px; margin-left: 33px; color: #bdbdc0; }
.trash { width: 42px; height: 42px; margin: 0 42px 0 51px; color: #e04a5f; }
.search { display: flex; align-items: center; width: 1746px; height: 75px; margin-left: 25px; border: 2px solid #2a2a2e; border-radius: 16px; color: #67676b; padding-left: 23px; margin-right: 22px; }
.search svg { width: 42px; height: 42px; color: #bdbdc0; }
.search i { width: 2px; height: 43px; margin: 0 26px 0 14px; background: #2d2d31; }
.f1 { width: 319px; padding: 0 21px 0 23px; margin-right: 17.500px; }
.f2 { width: 315px; padding: 0 21px 0 15px; margin-right: 17px; }
.f3 { width: 230px; padding-left: 15px; }
.f3 b { min-width: 52px; }

.tr { display: grid; grid-template-columns: 113px 840px 420.500px 738px 384px 534px 194px; }
.tr > div { display: flex; align-items: center; }
.th { height: 85px; margin-bottom: 12px; border-top-left-radius: 20px; background: #1a1b1e; color: #a5a5a8; font-size: 29px; }
.row { background: #151427; border-radius: 16px 0 0 16px; }
.r1 { height: 114px; margin-bottom: 13px; } .r2 { height: 109px; }
.c-check { padding-left: 23px; }
.check { width: 33px; height: 34px; border-radius: 8px; background: #433fe0; display: flex; align-items: center; justify-content: center; }
.check svg { width: 31px; height: 31px; }
.sort { width: 17px; height: 26px; margin: -4px 0 0 12px; display: flex; flex-direction: column; justify-content: space-between; }
.sort::before, .sort::after { content: ""; border: 8.500px solid transparent; }
.sort::before { border-top: 0; border-bottom: 9px solid #606064; }
.sort::after { border-bottom: 0; border-top: 9px solid #606064; }
.sort.asc::before { border-bottom-color: #4a43e0; }
.start { display: flex; align-items: center; width: 210px; height: 75px; padding-left: 33px; border: 2px solid #272375; border-radius: 16px; color: #4a43e0; letter-spacing: .15px; }
.start svg { width: 42px; height: 42px; margin-right: 18px; }
.rc { width: 40px; height: 40px; margin-left: 27px; color: #47474f; }
.rd { width: 42px; height: 42px; margin: 0 35px 0 42px; color: #bdbdc0; }
.c-name strong { display: block; font-weight: 500; font-size: 29px; }
.c-name small { display: block; font-size: 26px; margin-top: 15px; color: #9d9da3; letter-spacing: -.1px; }
.r1 .c-name p, .c-last p { padding-top: 2px; }
.c-last span { display: block; color: #a5a5ab; margin-top: 14px; letter-spacing: .4px; }
.new { background: #433fe0; border-radius: 11px; font-weight: 600; font-size: 24.500px; width: 79px; height: 50px; display: flex; align-items: center; justify-content: center; }
.tr > .c-proxy { flex-direction: column; align-items: flex-start; justify-content: center; color: #bdbdc0; }
.tr > .two { justify-content: flex-start; padding-top: 12px; }
.c-proxy p { display: flex; padding-left: 12.500px; }
.c-proxy p svg { width: 38px; height: 38px; }
.c-proxy p .pl { margin-left: 41px; }
.c-proxy em { display: flex; align-items: center; gap: 13px; height: 43px; width: 130px; margin-top: 20px; padding-left: 16px; border-radius: 12px; background: #1e1c2e; color: #6fd38f; font-size: 26px; }
.c-proxy em::before { content: ""; width: 21px; height: 21px; border-radius: 50%; background: #6fd38f; }
.c-note { padding-left: 23px; color: #bdbdc3; }
.c-note svg { width: 42px; height: 42px; }
.chip { border: 2px solid #2c437c; border-radius: 11px; height: 51px; width: 94px; display: flex; align-items: center; justify-content: center; color: #3a5aa0; font-size: 27.500px; }
.c-tags { padding-left: 9.500px; color: #c4c4c9; }
.c-tags svg { width: 42px; height: 42px; }
.th > div:nth-child(5) { padding-left: 4px; }
.hscroll { margin-top: auto; width: 2245px; margin-left: 3px; height: 18px; border-radius: 8px; background: #35353d; }

.pager { display: flex; align-items: center; height: 175px; font-size: 26px; color: #a3a3a7; }
.clear { width: 32px; height: 32px; margin-left: 30px; color: #e04a5f; }
.range { margin-left: auto; letter-spacing: .5px; }
.pager b { width: 176px; height: 75px; border: 2px solid #2a2a2e; border-radius: 16px; background: #121216; color: #fff; font-weight: 400; font-size: 29px; display: flex; align-items: center; justify-content: center; }
.prev, .next { width: 40px; height: 40px; color: #47474b; transform: rotate(90deg); }
.prev { margin: 0 37px 0 34px; }
.next { transform: rotate(-90deg); margin: 0 16px 0 34px; }

/* Actions menu, opened from the three-dot button */
.menu { position: absolute; left: 2016px; top: 112px; width: 661px; height: 1674px; padding: 12px 11px; border: 2px solid #1f1f23; border-radius: 34px; background: #121216; box-shadow: 0 10px 60px rgba(0,0,0,.3); }
.menu a { display: flex; align-items: center; height: 76px; padding-left: 26px; border-radius: 18px; letter-spacing: .22px; }
.menu a + a { margin-top: 4px; }
.menu svg { width: 39px; height: 39px; margin-right: 15.500px; }
.menu hr { margin: 12px 0; background: #29292d; }
.menu .danger { color: #de4a5f; }
.menu .hover { background: #252529; }

.notes { position: absolute; inset: 0; width: 3840px; height: 2110px; pointer-events: none; }
.num { fill: #fff; font: 700 24px "Open Sans", sans-serif; text-anchor: middle; }
```
